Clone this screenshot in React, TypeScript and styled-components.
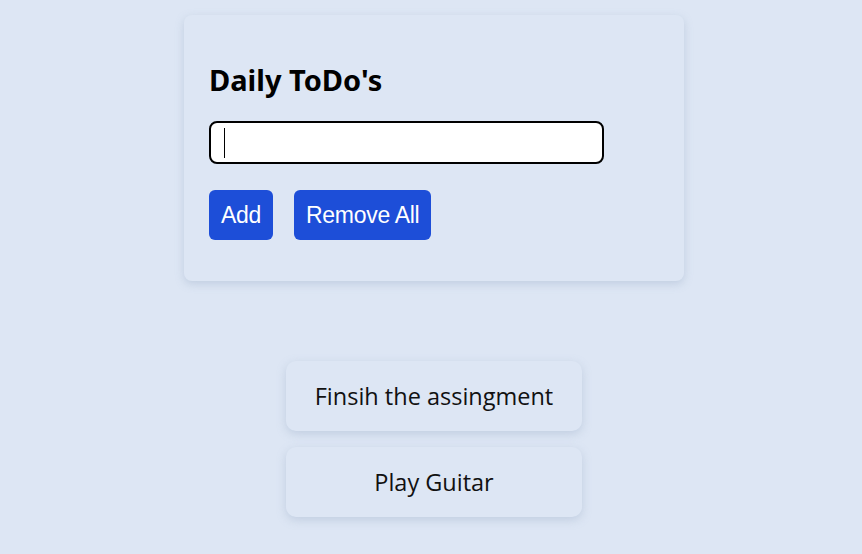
import React, { useState } from 'react';
import styled, { createGlobalStyle } from 'styled-components';

const GlobalStyle = createGlobalStyle`
  html, body {
    margin: 0;
    padding: 0;
    background: #dde6f4;
  }
`;

const Page = styled.div`
  min-height: 100vh;
  box-sizing: border-box;
  padding: 15px 0 30px 6px;
  display: flex;
  flex-direction: column;
  align-items: center;
`;

const Card = styled.div`
  width: 500px;
  box-sizing: border-box;
  padding: 46px 25px 41px;
  border-radius: 8px;
  background: #dde6f4;
  box-shadow: 0 3px 8px rgba(140, 160, 190, 0.35);
`;

const Title = styled.h1`
  margin: 0 0 22px;
  font-family: 'Noto Sans', sans-serif;
  font-weight: 700;
  font-size: 29px;
  line-height: 38px;
  color: #000;
`;

const InputWrap = styled.div`
  position: relative;
  width: 395px;
`;

const Input = styled.input`
  display: block;
  width: 100%;
  height: 43px;
  box-sizing: border-box;
  border: 2px solid #000;
  border-radius: 8px;
  padding: 0 14px;
  background: #fff;
  font-family: 'Liberation Sans', Arial, sans-serif;
  font-size: 26px;
  outline: none;
  caret-color: transparent;
`;

const Caret = styled.span`
  position: absolute;
  left: 15px;
  top: 7px;
  width: 1px;
  height: 30px;
  background: #000;
  pointer-events: none;
`;

const Actions = styled.div`
  display: flex;
  gap: 21px;
  margin-top: 26px;
`;

const Button = styled.button`
  height: 50px;
  padding: 0 12px;
  border: none;
  border-radius: 6px;
  background: #1d4ed8;
  color: #fff;
  font-family: 'Liberation Sans', Arial, sans-serif;
  font-size: 23px;
  letter-spacing: -0.3px;
  cursor: pointer;
`;

const List = styled.div`
  margin-top: 80px;
  display: flex;
  flex-direction: column;
  gap: 16px;
`;

const Item = styled.div`
  width: 296px;
  height: 70px;
  display: flex;
  align-items: center;
  justify-content: center;
  border-radius: 10px;
  background: #dde6f4;
  box-shadow: 0 3px 10px rgba(140, 160, 190, 0.35);
  font-family: 'Open Sans', sans-serif;
  font-weight: 500;
  font-size: 23.5px;
  color: #111;
`;

export default function App() {
  const [text, setText] = useState('');
  const [todos, setTodos] = useState<string[]>(['Finsih the assingment', 'Play Guitar']);

  return (
    <>
      <GlobalStyle />
      <Page>
        <Card>
          <Title>Daily ToDo's</Title>
          <InputWrap>
            <Input value={text} onChange={(e) => setText(e.target.value)} />
            {text === '' && <Caret />}
          </InputWrap>
          <Actions>
            <Button
              onClick={() => {
                if (text.trim()) setTodos([...todos, text.trim()]);
                setText('');
              }}
            >
              Add
            </Button>
            <Button onClick={() => setTodos([])}>Remove All</Button>
          </Actions>
        </Card>
        <List>
          {todos.map((t, i) => (
            <Item key={i}>{t}</Item>
          ))}
        </List>
      </Page>
    </>
  );
}
